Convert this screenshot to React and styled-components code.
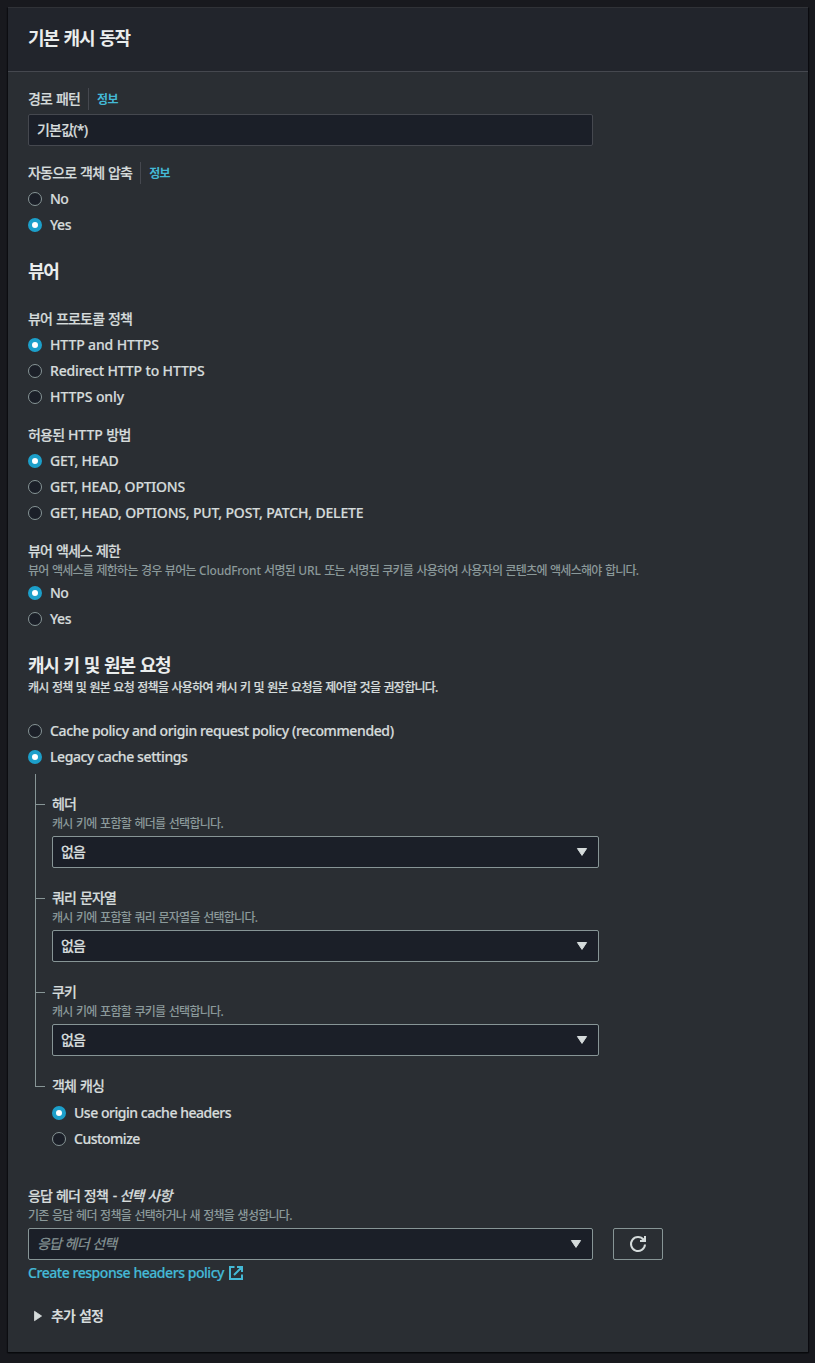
import React, { useState } from 'react';
import styled, { createGlobalStyle, css } from 'styled-components';

const GlobalStyle = createGlobalStyle`
  * { box-sizing: border-box; }
  body {
    margin: 0;
    background: #18191e;
    color: #d5dbdb;
    font-family: "Noto Sans", "Noto Sans CJK KR", sans-serif;
    font-size: 14px;
    -webkit-text-stroke: 0.2px currentColor;
  }
`;

const Page = styled.main`
  padding: 7px 7px 11px 8px;
  min-height: 1363px;
`;

const Panel = styled.section`
  height: 1345px;
  border-top: 1px solid #303237;
  background: #2a2e33;
  box-shadow: 0 1px 1px #08090c, 1px 1px 1px #0b0c10, -1px 1px 1px #0e0f13;
  width: 800px;
`;

const PanelHeader = styled.header`
  height: 64px;
  padding: 0 20px 4px;
  display: flex;
  align-items: center;
  background: #22252c;
  border-bottom: 1px solid #45484f;
`;

const Title = styled.h2`
  margin: 0;
  height: 22px;
  line-height: 22px;
  font-size: 18px;
  font-weight: 700;
  color: #eaeded;
  white-space: nowrap;
  letter-spacing: -1.2px;
  word-spacing: 1.4px;
  -webkit-text-stroke: 0;
`;

const PanelBody = styled.div`
  padding: 16px 20px 0;
`;

const Section = styled.div`
  margin-top: ${(p) => p.$top ?? 16}px;
`;

const Label = styled.div`
  display: flex;
  height: 22px;
  line-height: 22px;
  white-space: pre;
  font-weight: 500;
  letter-spacing: -0.8px;
  word-spacing: ${(p) => p.$ws ?? 0.9}px;
`;

const Latin = styled.span`
  letter-spacing: ${(p) => p.$ls ?? 0}px;
`;

const Dash = styled.span`
  margin: 0 3px 0 1px;
`;

const InfoLink = styled.a`
  margin-left: 8px;
  padding-left: 8px;
  border-left: 1px solid #45484f;
  color: #44b9d6;
  font-size: 12px;
  line-height: 24px;
  font-weight: 700;
  letter-spacing: -0.6px;
  -webkit-text-stroke: 0;
`;

const Description = styled.div`
  height: 16px;
  line-height: 18px;
  margin-top: ${(p) => p.$top ?? 0}px;
  font-size: 12px;
  letter-spacing: -0.72px;
  word-spacing: ${(p) => p.$ws ?? 1}px;
  white-space: nowrap;
  color: ${(p) => (p.$strong ? '#d5dbdb' : '#8b999a')};
  font-weight: 500;
  ${(p) => !p.$strong && '-webkit-text-stroke: 0;'}
`;

const box = css`
  height: 32px;
  display: flex;
  align-items: center;
  padding: 0 8px;
  border-radius: 2px;
  background: #1b1f28;
  border: 1px solid #879596;
  line-height: 20px;
`;

const Field = styled.div`
  ${box}
  width: 565px;
  margin-top: 4px;
  border-color: #45484f;
  font-weight: 500;
  letter-spacing: -0.8px;
`;

const Select = styled.div`
  ${box}
  width: ${(p) => p.$width}px;
  justify-content: space-between;
  padding-right: 10px;
  letter-spacing: -0.8px;
  font-weight: 500;
`;

const Placeholder = styled.span`
  color: #879596;
  font-style: italic;
  font-weight: 400;
  word-spacing: 0.6px;
`;

const RadioList = styled.div`
  display: flex;
  flex-direction: column;
  gap: 4px;
  margin-top: ${(p) => p.$top ?? 4}px;
`;

const RadioRow = styled.div`
  display: flex;
  align-items: center;
  gap: 8px;
  height: 22px;
  cursor: pointer;
`;

const RadioDot = styled.span`
  width: 14px;
  height: 14px;
  border-radius: 50%;
  border: ${(p) => (p.$on ? '4px solid #1c9fca' : '1px solid #879596')};
  background: ${(p) => (p.$on ? '#fff' : '#1b1f28')};
`;

const RadioText = styled.span`
  line-height: 22px;
  font-weight: 500;
  white-space: nowrap;
  letter-spacing: ${(p) => p.$ls}px;
`;

const Tree = styled.div`
  position: relative;
  margin-top: 25px;
  padding-left: 24px;
  display: flex;
  flex-direction: column;
  gap: 19px;
  &::before {
    content: '';
    position: absolute;
    left: 7px;
    top: -19px;
    height: 312px;
    border-left: 1px solid #879596;
  }
`;

const Branch = styled.div`
  position: relative;
  &::before {
    content: '';
    position: absolute;
    left: -17px;
    top: 11px;
    width: 10px;
    border-top: 1px solid #879596;
  }
`;

const FieldRow = styled.div`
  display: flex;
  gap: 20px;
  margin-top: 5px;
`;

const IconButton = styled.button`
  width: 50px;
  height: 32px;
  padding: 0;
  display: flex;
  align-items: center;
  justify-content: center;
  background: transparent;
  border: 1px solid #879596;
  border-radius: 2px;
`;

const PolicyLink = styled.a`
  display: flex;
  align-items: center;
  gap: 4px;
  height: 22px;
  margin-top: 2px;
  color: #44b9d6;
  font-weight: 500;
`;

const Expander = styled.div`
  display: flex;
  align-items: center;
  gap: 9px;
  height: 22px;
  line-height: 20px;
  margin-top: 21px;
  padding-left: 6px;
  font-weight: 700;
  letter-spacing: -0.8px;
  word-spacing: 1px;
  -webkit-text-stroke: 0;
`;

const Caret = () => (
  <svg width="12" height="10" viewBox="0 0 12 10">
    <path d="M1.4 1.5h9.2L6 8.4z" fill="#d5dbdb" stroke="#d5dbdb" strokeLinejoin="round" />
  </svg>
);

function Radios({ options, initial, top }) {
  const [selected, setSelected] = useState(initial);
  return (
    <RadioList $top={top} role="radiogroup">
      {options.map(([text, ls], i) => (
        <RadioRow key={text} role="radio" aria-checked={i === selected} onClick={() => setSelected(i)}>
          <RadioDot $on={i === selected} />
          <RadioText $ls={ls}>{text}</RadioText>
        </RadioRow>
      ))}
    </RadioList>
  );
}

const YES_NO = [['No', -0.5], ['Yes', -0.4]];

const SELECTS = [
  ['헤더', '캐시 키에 포함할 헤더를 선택합니다.'],
  ['쿼리 문자열', '캐시 키에 포함할 쿼리 문자열을 선택합니다.'],
  ['쿠키', '캐시 키에 포함할 쿠키를 선택합니다.'],
];

export default function App() {
  return (
    <Page>
      <GlobalStyle />
      <Panel>
        <PanelHeader>
          <Title>기본 캐시 동작</Title>
        </PanelHeader>
        <PanelBody>
          <Label>경로 패턴<InfoLink>정보</InfoLink></Label>
          <Field>기본값(*)</Field>

          <Section>
            <Label>자동으로 객체 압축<InfoLink>정보</InfoLink></Label>
            <Radios options={YES_NO} initial={1} />
          </Section>

          <Section $top={24}>
            <Title>뷰어</Title>
          </Section>

          <Section $top={26}>
            <Label>뷰어 프로토콜 정책</Label>
            <Radios
              options={[['HTTP and HTTPS', -0.12], ['Redirect HTTP to HTTPS', -0.15], ['HTTPS only', -0.08]]}
              initial={0}
            />
          </Section>

          <Section>
            <Label>허용된 <Latin $ls={-0.1}>HTTP</Latin> 방법</Label>
            <Radios
              options={[
                ['GET, HEAD', -0.18],
                ['GET, HEAD, OPTIONS', -0.22],
                ['GET, HEAD, OPTIONS, PUT, POST, PATCH, DELETE', -0.17],
              ]}
              initial={0}
            />
          </Section>

          <Section>
            <Label>뷰어 액세스 제한</Label>
            <Description $ws={0.85}>
              뷰어 액세스를 제한하는 경우 뷰어는 <Latin $ls={-0.2}>CloudFront</Latin> 서명된 <Latin $ls={-0.1}>URL</Latin> 또는 서명된 쿠키를 사용하여 사용자의 콘텐츠에 액세스해야 합니다.
            </Description>
            <Radios options={YES_NO} initial={0} />
          </Section>

          <Section $top={24}>
            <Title>캐시 키 및 원본 요청</Title>
            <Description $strong $top={3} $ws={0.88}>캐시 정책 및 원본 요청 정책을 사용하여 캐시 키 및 원본 요청을 제어할 것을 권장합니다.</Description>
            <Radios
              top={25}
              options={[
                ['Cache policy and origin request policy (recommended)', -0.38],
                ['Legacy cache settings', -0.4],
              ]}
              initial={1}
            />
            <Tree>
              {SELECTS.map(([name, help]) => (
                <Branch key={name}>
                  <Label>{name}</Label>
                  <Description>{help}</Description>
                  <FieldRow>
                    <Select $width={547}>없음<Caret /></Select>
                  </FieldRow>
                </Branch>
              ))}
              <Branch>
                <Label>객체 캐싱</Label>
                <Radios top={5} options={[['Use origin cache headers', -0.47], ['Customize', -0.47]]} initial={0} />
              </Branch>
            </Tree>
          </Section>

          <Section $top={35}>
            <Label>응답 헤더 정책 <Dash>-</Dash> <i>선택 사항</i></Label>
            <Description>기존 응답 헤더 정책을 선택하거나 새 정책을 생성합니다.</Description>
            <FieldRow>
              <Select $width={565}>
                <Placeholder>응답 헤더 선택</Placeholder>
                <Caret />
              </Select>
              <IconButton aria-label="새로 고침">
                <svg width="18" height="18" viewBox="0 0 18 18" fill="none" stroke="#d5dbdb" strokeWidth="2">
                  <path d="M16 9.5A7 7 0 1 1 14.6 4.8" />
                  <path d="M16 1v5h-5" />
                  <path d="M12.5 4L16 6V3z" fill="#d5dbdb" stroke="none" />
                </svg>
              </IconButton>
            </FieldRow>
            <PolicyLink>
              <RadioText $ls={-0.45}>Create response headers policy</RadioText>
              <svg width="16" height="16" viewBox="0 0 16 16" fill="none" stroke="#44b9d6" strokeWidth="2">
                <path d="M6.5 2H2v12h12V9.5M9 2h5v5M14 2L6 10" />
              </svg>
            </PolicyLink>
            <Expander>
              <svg width="8" height="12" viewBox="0 0 8 12">
                <path d="M0.5 1.3v9.4L7.6 6z" fill="#d5dbdb" stroke="#d5dbdb" strokeWidth="0.8" strokeLinejoin="round" />
              </svg>
              추가 설정
            </Expander>
          </Section>
        </PanelBody>
      </Panel>
    </Page>
  );
}
